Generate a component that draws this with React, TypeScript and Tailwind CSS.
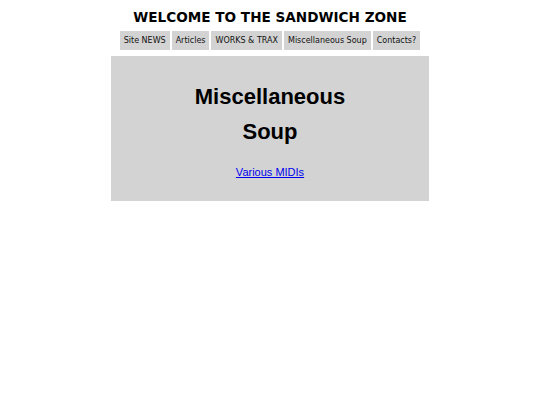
export default function App() {
  const links = ['Site NEWS', 'Articles', 'WORKS & TRAX', 'Miscellaneous Soup', 'Contacts?'];
  return (
    <div className="min-h-[405px] bg-white flex flex-col items-center">
      <h1 className="mt-[9px] text-[13.6px] leading-[17px] font-bold text-black font-['DejaVu_Sans',sans-serif]">
        WELCOME TO THE SANDWICH ZONE
      </h1>
      <nav className="mt-[5px] flex gap-[2px]">
        {links.map((l) => (
          <a
            key={l}
            href="#"
            className="bg-[#d3d3d3] px-[4px] h-[19px] flex items-center text-[8px] text-[#111] font-['DejaVu_Sans',sans-serif]"
          >
            {l}
          </a>
        ))}
      </nav>
      <main className="mt-[6px] w-[318px] h-[145px] bg-[#d3d3d3] flex flex-col items-center font-['Liberation_Sans',sans-serif]">
        <h2 className="mt-[23px] w-[180px] text-center text-[22px] leading-[35px] font-bold text-black">
          Miscellaneous Soup
        </h2>
        <a href="#" className="mt-[15px] text-[11px] text-[#0000ee] underline">
          Various MIDIs
        </a>
      </main>
    </div>
  );
}
